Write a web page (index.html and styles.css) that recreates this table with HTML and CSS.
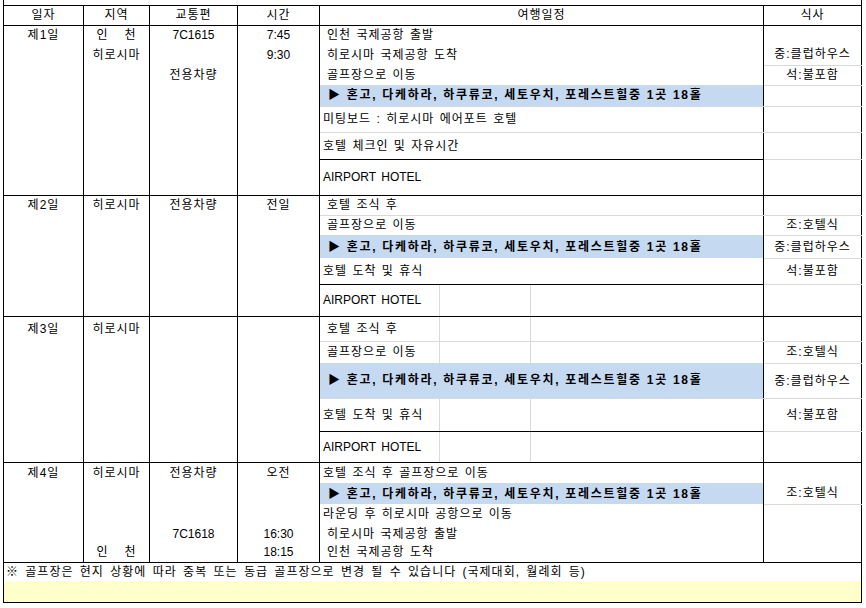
FILE: index.html
```html
<!DOCTYPE html>
<html lang="ko">
<head>
<meta charset="utf-8">
<title>일정표</title>
<link rel="stylesheet" href="styles.css">
</head>
<body>
<table class="sheet">
  <colgroup>
    <col class="c-day"><col class="c-area"><col class="c-trans"><col class="c-time"><col class="c-plan"><col class="c-meal">
  </colgroup>
  <tbody>
    <tr class="h5"><td colspan="6" class="cut"></td></tr>
    <tr class="h20 head">
      <td>일자</td><td>지역</td><td>교통편</td><td>시간</td><td>여행일정</td><td>식사</td>
    </tr>

    <!-- Day 1 -->
    <tr class="h19">
      <td class="l">제1일</td><td class="l sp">인   천</td><td class="l en">7C1615</td><td class="l en">7:45</td>
      <td class="p ind">인천 국제공항 출발</td><td class="m"></td>
    </tr>
    <tr class="h21">
      <td class="l"></td><td class="l">히로시마</td><td class="l"></td><td class="l en">9:30</td>
      <td class="p ind">히로시마 국제공항 도착</td><td class="m lb">중:클럽하우스</td>
    </tr>
    <tr class="h20">
      <td class="l"></td><td class="l"></td><td class="l">전용차량</td><td class="l"></td>
      <td class="p ind">골프장으로 이동</td><td class="m lb">석:불포함</td>
    </tr>
    <tr class="h21">
      <td class="l"></td><td class="l"></td><td class="l"></td><td class="l"></td>
      <td class="p golf lb">▶ 혼고, 다케하라, 하쿠류코, 세토우치, 포레스트힐중 1곳 18홀</td><td class="m lb"></td>
    </tr>
    <tr class="h26">
      <td class="l"></td><td class="l"></td><td class="l"></td><td class="l"></td>
      <td class="p lb">미팅보드 : 히로시마 에어포트 호텔</td><td class="m lb"></td>
    </tr>
    <tr class="h27">
      <td class="l"></td><td class="l"></td><td class="l"></td><td class="l"></td>
      <td class="p db">호텔 체크인 및 자유시간</td><td class="m lb"></td>
    </tr>
    <tr class="h36 end">
      <td class="l"></td><td class="l"></td><td class="l"></td><td class="l"></td>
      <td class="p en">AIRPORT HOTEL</td><td class="m"></td>
    </tr>

    <!-- Day 2 -->
    <tr class="h20">
      <td class="l">제2일</td><td class="l">히로시마</td><td class="l">전용차량</td><td class="l">전일</td>
      <td class="p ind lb">호텔 조식 후</td><td class="m lb"></td>
    </tr>
    <tr class="h20">
      <td class="l"></td><td class="l"></td><td class="l"></td><td class="l"></td>
      <td class="p ind">골프장으로 이동</td><td class="m lb">조:호텔식</td>
    </tr>
    <tr class="h23">
      <td class="l"></td><td class="l"></td><td class="l"></td><td class="l"></td>
      <td class="p golf">▶ 혼고, 다케하라, 하쿠류코, 세토우치, 포레스트힐중 1곳 18홀</td><td class="m lb">중:클럽하우스</td>
    </tr>
    <tr class="h26">
      <td class="l"></td><td class="l"></td><td class="l"></td><td class="l"></td>
      <td class="p db">호텔 도착 및 휴식</td><td class="m lb">석:불포함</td>
    </tr>
    <tr class="h32 end">
      <td class="l"></td><td class="l"></td><td class="l"></td><td class="l"></td>
      <td class="p grid3 en">AIRPORT HOTEL</td><td class="m"></td>
    </tr>

    <!-- Day 3 -->
    <tr class="h25">
      <td class="l">제3일</td><td class="l">히로시마</td><td class="l"></td><td class="l"></td>
      <td class="p ind grid3 lb">호텔 조식 후</td><td class="m lb"></td>
    </tr>
    <tr class="h22">
      <td class="l"></td><td class="l"></td><td class="l"></td><td class="l"></td>
      <td class="p ind grid3">골프장으로 이동</td><td class="m lb">조:호텔식</td>
    </tr>
    <tr class="h35">
      <td class="l"></td><td class="l"></td><td class="l"></td><td class="l"></td>
      <td class="p golf lb">▶ 혼고, 다케하라, 하쿠류코, 세토우치, 포레스트힐중 1곳 18홀</td><td class="m lb">중:클럽하우스</td>
    </tr>
    <tr class="h33">
      <td class="l"></td><td class="l"></td><td class="l"></td><td class="l"></td>
      <td class="p grid3 db">호텔 도착 및 휴식</td><td class="m lb">석:불포함</td>
    </tr>
    <tr class="h31 end">
      <td class="l"></td><td class="l"></td><td class="l"></td><td class="l"></td>
      <td class="p grid3 en">AIRPORT HOTEL</td><td class="m"></td>
    </tr>

    <!-- Day 4 -->
    <tr class="h21">
      <td class="l">제4일</td><td class="l">히로시마</td><td class="l">전용차량</td><td class="l">오전</td>
      <td class="p">호텔 조식 후 골프장으로 이동</td><td class="m"></td>
    </tr>
    <tr class="h21">
      <td class="l"></td><td class="l"></td><td class="l"></td><td class="l"></td>
      <td class="p golf">▶ 혼고, 다케하라, 하쿠류코, 세토우치, 포레스트힐중 1곳 18홀</td><td class="m lb">조:호텔식</td>
    </tr>
    <tr class="h20">
      <td class="l"></td><td class="l"></td><td class="l"></td><td class="l"></td>
      <td class="p">라운딩 후 히로시마 공항으로 이동</td><td class="m"></td>
    </tr>
    <tr class="h19">
      <td class="l"></td><td class="l"></td><td class="l en">7C1618</td><td class="l en">16:30</td>
      <td class="p ind">히로시마 국제공항 출발</td><td class="m"></td>
    </tr>
    <tr class="h19 end">
      <td class="l"></td><td class="l sp">인   천</td><td class="l"></td><td class="l en">18:15</td>
      <td class="p ind">인천 국제공항 도착</td><td class="m"></td>
    </tr>

    <tr class="h19">
      <td colspan="6" class="note">※ 골프장은 현지 상황에 따라 중복 또는 동급 골프장으로 변경 될 수 있습니다 (국제대회, 월례회 등)</td>
    </tr>
    <tr class="h21">
      <td colspan="6" class="note yellow"></td>
    </tr>
  </tbody>
</table>
</body>
</html>
```
FILE: styles.css
```css
html, body {
  margin: 0;
  padding: 0;
  background: #ffffff;
}

.sheet {
  margin-left: 3px;
  border-collapse: collapse;
  table-layout: fixed;
  width: 859px;
  font-family: "Liberation Sans", "Noto Sans CJK KR", sans-serif;
  font-size: 12px;
  color: #000;
  letter-spacing: 1px;
  word-spacing: 1px;
}

.c-day { width: 80px; }
.c-area { width: 66px; }
.c-trans { width: 88px; }
.c-time { width: 82px; }
.c-plan { width: 444px; }
.c-meal { width: 98px; }

.sheet td {
  padding: 0;
  border: none;
  white-space: nowrap;
  overflow: hidden;
  vertical-align: middle;
  line-height: 14px;
}

.sheet td.en {
  letter-spacing: 0;
  word-spacing: 2px;
}

.h5 { height: 5px; }
.h19 { height: 19px; }
.h20 { height: 20px; }
.h21 { height: 21px; }
.h22 { height: 22px; }
.h23 { height: 23px; }
.h25 { height: 25px; }
.h26 { height: 26px; }
.h27 { height: 27px; }
.h31 { height: 31px; }
.h32 { height: 32px; }
.h33 { height: 33px; }
.h35 { height: 35px; }
.h36 { height: 36px; }

.sheet td.cut {
  border-left: 1px solid #000;
  border-right: 1px solid #000;
  border-bottom: 1px solid #000;
}

.head td {
  border: 1px solid #000;
  text-align: center;
}

.sheet td.l {
  border-left: 1px solid #000;
  border-right: 1px solid #000;
  text-align: center;
}

.sheet td.sp {
  white-space: pre;
  letter-spacing: 1px;
}

.sheet td.p {
  border-left: 1px solid #000;
  border-right: 1px solid #000;
  padding-left: 3px;
  text-align: left;
}

.sheet td.p.ind { padding-left: 7px; }

.sheet td.m {
  border-left: 1px solid #000;
  border-right: 1px solid #000;
  text-align: center;
}

.sheet td.lb { border-bottom: 1px solid #d9d9d9; }
.sheet td.db { border-bottom: 1px solid #000; }

.sheet .end td.l,
.sheet .end td.p,
.sheet .end td.m { border-bottom: 1px solid #000; }

.sheet td.golf {
  background: #c5d9f1;
  font-weight: 700;
  padding-left: 8px;
  letter-spacing: 1.7px;
  word-spacing: 0;
}

.sheet td.grid3 {
  background-image:
    linear-gradient(#d9d9d9, #d9d9d9),
    linear-gradient(#d9d9d9, #d9d9d9);
  background-size: 1px 100%, 1px 100%;
  background-position: 119px 0, 210px 0;
  background-repeat: no-repeat;
}

.sheet td.note {
  border-left: 1px solid #000;
  border-right: 1px solid #000;
  padding-left: 2px;
  text-align: left;
  word-spacing: 2px;
}

.sheet td.yellow {
  background: #ffffcc;
  border-bottom: 1px solid #000;
}
```
